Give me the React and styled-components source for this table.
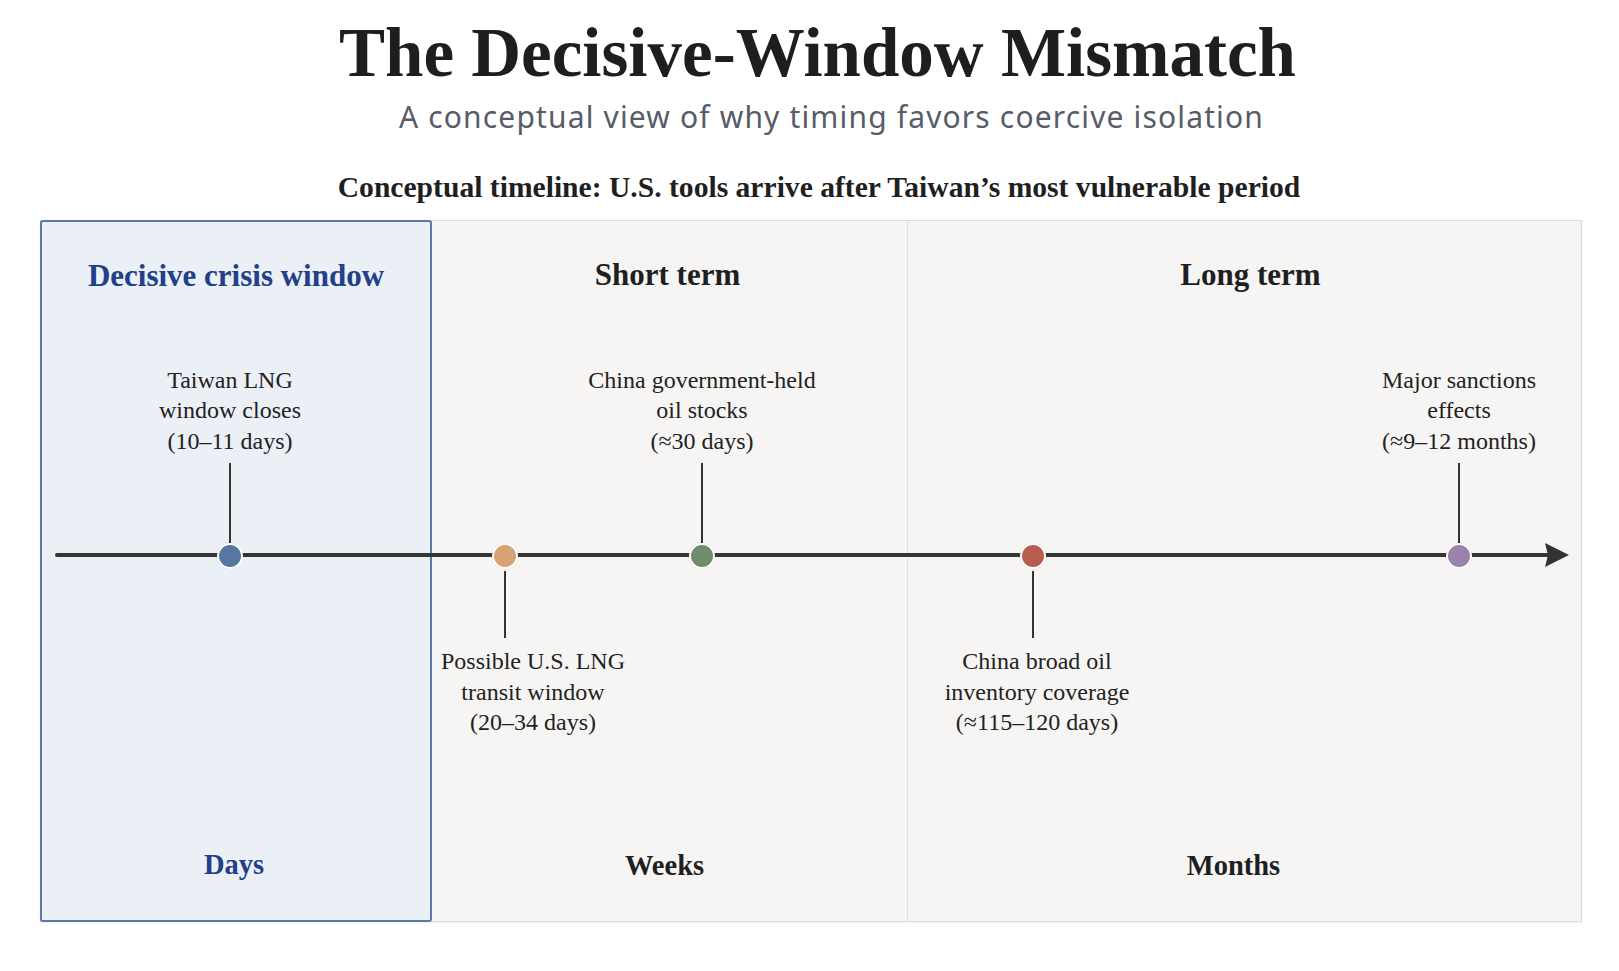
import React from "react";
import styled, { createGlobalStyle } from "styled-components";

const GlobalStyle = createGlobalStyle`
  html, body {
    margin: 0;
    padding: 0;
    background: #ffffff;
  }
  body {
    font-family: "Liberation Serif", "Times New Roman", serif;
    color: #222;
  }
`;

// nudge values shift a text's centre left (-) or right (+) within its column
const columns = [
  { key: "days", heading: "Decisive crisis window", scale: "Days", highlight: true, scaleNudge: -2 },
  { key: "weeks", heading: "Short term", scale: "Weeks", headingNudge: -2, scaleNudge: -5 },
  { key: "months", heading: "Long term", scale: "Months", divider: true, headingNudge: 6, scaleNudge: -11 },
];

// x is measured from the left edge of the chart's inner box
const markers = [
  { x: 189, color: "#5777a3", side: "above", lines: ["Taiwan LNG", "window closes", "(10–11 days)"] },
  { x: 464, color: "#d9a272", side: "below", shift: 28, lines: ["Possible U.S. LNG", "transit window", "(20–34 days)"] },
  { x: 661, color: "#6f8c6b", side: "above", lines: ["China government-held", "oil stocks", "(≈30 days)"] },
  { x: 992, color: "#b85c50", side: "below", shift: 4, lines: ["China broad oil", "inventory coverage", "(≈115–120 days)"] },
  { x: 1418, color: "#9b82ab", side: "above", lines: ["Major sanctions", "effects", "(≈9–12 months)"] },
];

const LabelText = ({ lines }) => lines.map((line, j) => <div key={j}>{line}</div>);

const App = () => {
  return (
    <Page>
      <GlobalStyle />
      <Header>
        <Title>The Decisive-Window Mismatch</Title>
        <Subtitle>A conceptual view of why timing favors coercive isolation</Subtitle>
        <Caption>Conceptual timeline: U.S. tools arrive after Taiwan’s most vulnerable period</Caption>
      </Header>

      <Chart>
        {columns.map((col) => (
          <Column key={col.key} highlight={col.highlight} divider={col.divider}>
            <Heading highlight={col.highlight} nudge={col.headingNudge}>
              {col.heading}
            </Heading>
            <Scale highlight={col.highlight} nudge={col.scaleNudge}>
              {col.scale}
            </Scale>
          </Column>
        ))}

        <Timeline>
          <Axis>
            <AxisLine />
            <svg width="24" height="24" viewBox="0 0 24 24">
              <polygon points="0,0 24,12 0,24 3,12" fill="#333" />
            </svg>
          </Axis>

          {markers.map((m, i) => (
            <Marker key={i} style={{ left: m.x }}>
              <TopSlot>
                {m.side === "above" && (
                  <Label>
                    <LabelText lines={m.lines} />
                  </Label>
                )}
              </TopSlot>
              <Stem side="above" show={m.side === "above"} />
              <Dot color={m.color} />
              <Stem side="below" show={m.side === "below"} />
              {m.side === "below" && (
                <Label below shift={m.shift}>
                  <LabelText lines={m.lines} />
                </Label>
              )}
            </Marker>
          ))}
        </Timeline>
      </Chart>
    </Page>
  );
};

export default App;

const Page = styled.div`
  width: 1619px;
  height: 971px;
  padding-top: 15px;
  box-sizing: border-box;
  overflow: hidden;
`;

const Header = styled.header`
  display: flex;
  flex-direction: column;
  align-items: center;
`;

const Title = styled.h1`
  margin: 0;
  padding-left: 16px;
  font-family: "Liberation Serif", "Times New Roman", serif;
  font-size: 69px;
  line-height: 76px;
  font-weight: 700;
  color: #1e1e1e;
`;

const Subtitle = styled.p`
  margin: 8px 0 0;
  padding-left: 44px;
  font-family: "Noto Sans", "Open Sans", sans-serif;
  font-size: 30px;
  line-height: 35px;
  letter-spacing: 1.15px;
  font-weight: 400;
  color: #565c68;
`;

const Caption = styled.h2`
  margin: 36px 0 0;
  padding-left: 19px;
  font-family: "Liberation Serif", "Times New Roman", serif;
  font-size: 29.6px;
  line-height: 35px;
  font-weight: 700;
  color: #1f1f1f;
`;

const Chart = styled.section`
  position: relative;
  margin: 15px 0 0 40px;
  width: 1542px;
  height: 702px;
  box-sizing: border-box;
  display: grid;
  grid-template-columns: 391px 475px 1fr;
  background: #f6f5f3;
  border: 1px solid #dcdad6;
  box-shadow: 0 1px 2px rgba(0, 0, 0, 0.06);
`;

const Column = styled.div`
  display: flex;
  flex-direction: column;
  justify-content: space-between;
  align-items: center;
  padding: 35px 0 37px;
  box-sizing: border-box;
  border-left: ${(p) => (p.divider ? "1px solid #e2e0dc" : "none")};
  ${(p) =>
    p.highlight &&
    `
    margin: -1px 0 -1px -1px;
    background: #ebeff6;
    border: 2px solid #5b77a5;
    border-radius: 3px;
  `}
`;

const Heading = styled.h3`
  margin: 0 0 0 ${(p) => (p.nudge || 0) * 2}px;
  font-family: "Liberation Serif", "Times New Roman", serif;
  font-size: 31px;
  line-height: 37px;
  font-weight: 700;
  color: ${(p) => (p.highlight ? "#22408a" : "#1f1f1f")};
`;

const Scale = styled.div`
  margin-left: ${(p) => (p.nudge || 0) * 2}px;
  font-family: "Liberation Serif", "Times New Roman", serif;
  font-size: 28.5px;
  line-height: 37px;
  font-weight: 700;
  color: ${(p) => (p.highlight ? "#22408a" : "#1f1f1f")};
`;

const Timeline = styled.div`
  position: absolute;
  inset: 0;
  pointer-events: none;
`;

const Axis = styled.div`
  position: absolute;
  left: 14px;
  right: 12px;
  top: 322px;
  height: 24px;
  display: flex;
  align-items: center;

  svg {
    flex: none;
    display: block;
    margin-left: -3px;
  }
`;

const AxisLine = styled.div`
  flex: 1;
  height: 4px;
  background: #353535;
  border-radius: 2px 0 0 2px;
`;

const Marker = styled.div`
  position: absolute;
  top: 143px;
  width: 320px;
  transform: translateX(-50%);
  display: flex;
  flex-direction: column;
  align-items: center;
`;

const TopSlot = styled.div`
  height: 92px;
  display: flex;
  align-items: flex-end;
`;

const Dot = styled.span`
  flex: none;
  width: 22px;
  height: 22px;
  border-radius: 50%;
  background: ${(p) => p.color};
  border: 2px solid #ffffff;
  box-shadow: 0 0 1px rgba(0, 0, 0, 0.15);
`;

const Stem = styled.span`
  flex: none;
  width: 2px;
  background: ${(p) => (p.show ? "#333" : "transparent")};
  margin-top: ${(p) => (p.side === "above" ? "7px" : "2px")};
  height: ${(p) => (p.side === "above" ? "80px" : "67px")};
`;

const Label = styled.div`
  margin-top: ${(p) => (p.below ? "8px" : "0")};
  margin-left: ${(p) => (p.shift ? p.shift * 2 : 0)}px;
  text-align: center;
  font-family: "Liberation Serif", "Times New Roman", serif;
  font-size: 24px;
  line-height: 30.5px;
  color: #222;
  white-space: nowrap;
`;
